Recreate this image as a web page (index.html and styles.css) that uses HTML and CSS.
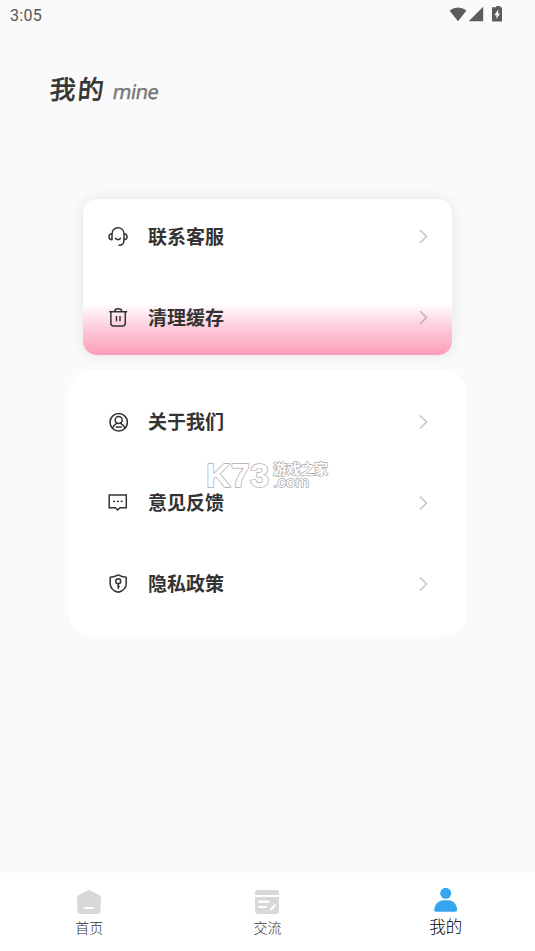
FILE: index.html
```html
<!DOCTYPE html>
<html lang="zh-CN">
<head>
<meta charset="utf-8">
<title>我的</title>
<link rel="stylesheet" href="styles.css">
</head>
<body>
<div class="screen">
  <header class="status">
    <span class="clock">3:05</span>
    <svg class="status-icons" width="56" height="18" viewBox="0 0 56 18" fill="#5c5c5c">
      <path d="M0.5 4.4Q9 -1.6 17.5 4.4L9 15.3Z"/>
      <path d="M34.2 .8V15.3H19.7Z"/>
      <path d="M45 1.2h2.2V0h4v1.2H53V15.5H43V1.200Z"/>
      <path d="M49.200 3.500L45.300 9.200H47.500V13L51.100 7.500H49.200Z" fill="#fafafa"/>
    </svg>
  </header>
  <h1 class="title"><span class="title-main">我的</span><span class="title-sub">mine</span></h1>

  <main>
    <ul class="card card-raised">
      <li class="row">
        <svg class="icon" viewBox="0 0 20 20"><path d="M4 7.500C4 3.800 6.500 1.200 10 1.200S16 3.800 16 7.500V13.500C16 17 14 18.800 11 18.800M4 7.200C2.200 7.200 1 8.300 1 10.300S2.200 13.300 4 13.300ZM16 7.200C17.800 7.200 19 8.300 19 10.300S17.800 13.300 16 13.300M7.400 11.800Q10 14.500 12.600 11.800"/></svg>
        <span class="label">联系客服</span>
        <svg class="chevron" viewBox="0 0 9 16"><path d="M1 1.500L7.500 8L1 14.500"/></svg>
      </li>
      <li class="row">
        <svg class="icon" viewBox="0 0 20 20"><path d="M1.800 4.200H18.600M2.900 4.200V15.800Q2.900 18.500 5.600 18.500H14.600Q17.300 18.500 17.300 15.800V4.200M6.500 4C6.900 .4 13.500 .4 13.900 4M8.500 9V13.300M12 9V13.300"/></svg>
        <span class="label">清理缓存</span>
        <svg class="chevron" viewBox="0 0 9 16"><path d="M1 1.500L7.500 8L1 14.500"/></svg>
      </li>
    </ul>

    <ul class="card card-flat">
      <li class="row">
        <svg class="icon" viewBox="0 0 20 20"><circle cx="10.700" cy="10.300" r="8.700"/><circle cx="10.700" cy="8" r="3.500"/><path d="M4.400 16C5.500 13.500 7.200 12.200 8.900 11.100M17 16C15.900 13.500 14.200 12.200 12.500 11.100M8.200 15.100H13.200"/></svg>
        <span class="label">关于我们</span>
        <svg class="chevron" viewBox="0 0 9 16"><path d="M1 1.500L7.500 8L1 14.500"/></svg>
      </li>
      <li class="row">
        <svg class="icon" viewBox="0 0 20 20"><path stroke-linejoin="miter" d="M1.200 2H18.300V14.700H12L9.700 17L7.400 14.700H1.200Z"/><path stroke-width="1.700" d="M5.800 8.300H6.200M9.600 8.300H10M13.400 8.300H13.800"/></svg>
        <span class="label">意见反馈</span>
        <svg class="chevron" viewBox="0 0 9 16"><path d="M1 1.500L7.500 8L1 14.500"/></svg>
      </li>
      <li class="row">
        <svg class="icon" viewBox="0 0 20 20"><path d="M10.200 .9Q13.600 3 18.200 3.200V9.700Q18.200 15.900 10.200 18.300Q2.200 15.900 2.200 9.700V3.200Q6.800 3 10.200 .9Z"/><circle cx="10.200" cy="7.300" r="2.500"/><path d="M10.200 9.800V14.500M10.200 12.600H11.300"/></svg>
        <span class="label">隐私政策</span>
        <svg class="chevron" viewBox="0 0 9 16"><path d="M1 1.500L7.500 8L1 14.500"/></svg>
      </li>
    </ul>
  </main>

  <nav class="tabs">
    <a class="tab">
      <svg width="26" height="26" viewBox="0 0 26 26"><path d="M11.800 1.300Q13 .7 14.200 1.300L24 6.500Q25 7.100 25 8.300L24.300 22.500Q24.200 25 21.700 25H4.300Q1.800 25 1.700 22.500L1 8.300Q1 7.100 2 6.500Z" fill="#d8d8d8"/><path d="M9.200 19H16.800" stroke="#fff" stroke-width="2" stroke-linecap="round"/></svg>
      <span>首页</span>
    </a>
    <a class="tab">
      <svg width="26" height="26" viewBox="0 0 26 26"><path d="M1 6V4Q1 1 4 1H22Q25 1 25 4V6ZM1 8H25V22Q25 25 22 25H4Q1 25 1 22Z" fill="#d8d8d8"/><path d="M5 12.700H14.500M5 18H12M17 20.500L21.200 16.300" stroke="#fff" stroke-width="2.200" stroke-linecap="round"/></svg>
      <span>交流</span>
    </a>
    <a class="tab tab-active">
      <svg width="26" height="26" viewBox="0 0 26 26" fill="#36a5ef"><circle cx="12.700" cy="6.300" r="5.500"/><path d="M3.500 24.800Q1 24.800 1.200 22.500C1.900 17 6 13.300 10 13.300H15.400C20 13.300 23.500 17 24.200 22.500Q24.400 24.800 22 24.800Z"/></svg>
      <span>我的</span>
    </a>
  </nav>

  <svg class="watermark" width="140" height="50" viewBox="-5 -10 140 50">
    <text class="mark-logo" x="1" y="26.500" textLength="63" lengthAdjust="spacingAndGlyphs">K73</text>
    <text class="mark-name" x="68" y="13.500" textLength="55" lengthAdjust="spacingAndGlyphs">游戏之家</text>
    <text class="mark-domain" x="68" y="27" textLength="36" lengthAdjust="spacingAndGlyphs">.com</text>
  </svg>
</div>
</body>
</html>
```

FILE: styles.css
```css
* {
  box-sizing: border-box;
}

body {
  margin: 0;
  background: #fafafa;
  color: #333;
  font-family: "Noto Sans CJK SC", sans-serif;
}

.screen {
  position: relative;
  display: flex;
  flex-direction: column;
  height: 951px;
  overflow: hidden;
}

.status {
  display: flex;
  justify-content: space-between;
  height: 30px;
  padding: 6px 32px 0 10px;
}

.clock {
  font: 400 16px/19px Roboto, sans-serif;
  color: #555;
  letter-spacing: 0.3px;
}

.status-icons {
  margin-right: -2px;
}

.title {
  display: flex;
  align-items: baseline;
  height: 40px;
  margin: 40px 0 0 50px;
  line-height: 36px;
}

.title-main {
  font-size: 26px;
  font-weight: 400;
  letter-spacing: 2px;
  -webkit-text-stroke: 0.7px #333;
  transform: skewX(-5deg);
}

.title-sub {
  margin-left: 7px;
  font: 400 20px/36px "Noto Sans", sans-serif;
  letter-spacing: -0.5px;
  color: #777;
  -webkit-text-stroke: 0.4px #777;
  transform: skewX(-10deg);
}

main {
  flex: 1;
  padding-top: 89px;
}

.card {
  margin: 0 auto;
  padding: 0;
  list-style: none;
}

.card-raised {
  width: 369px;
  height: 156px;
  border-radius: 14px;
  background: linear-gradient(#fff 0 67%, #fdc7d7 84%, #fd9db8 100%);
  box-shadow: 0 0 14px rgba(0, 0, 0, 0.09);
}

.card-raised .row {
  margin: 0 24px 0 25px;
  transform: translateY(-2.5px);
}

.card-flat {
  width: 399px;
  height: 266px;
  margin-top: 15px;
  padding: 12px 39px 0 40px;
  border-radius: 24px;
  background: #fff;
}

.row {
  display: flex;
  align-items: center;
  height: 80.7px;
}

.icon {
  width: 20px;
  height: 20px;
  fill: none;
  stroke: #333;
  stroke-width: 1.5;
  stroke-linecap: round;
  stroke-linejoin: round;
}

.label {
  flex: 1;
  margin-left: 20px;
  padding-bottom: 2.4px;
  font-size: 19px;
  font-weight: 700;
  line-height: 28px;
}

.chevron {
  width: 9px;
  height: 16px;
  fill: none;
  stroke: #000;
  stroke-opacity: 0.22;
  stroke-width: 1.7;
}

.tabs {
  display: grid;
  grid-template-columns: repeat(3, 1fr);
  height: 78px;
  background: #fff;
}

.tab {
  display: flex;
  flex-direction: column;
  align-items: center;
  padding-top: 16px;
  font-size: 14px;
  font-weight: 300;
  line-height: 20px;
  color: #333;
}

.tab span {
  margin-top: 2px;
}

.tab-active {
  padding-top: 14px;
  font-size: 16.5px;
  color: #000;
}

.tab-active span {
  margin-top: 3px;
}

.watermark {
  position: absolute;
  left: 200px;
  top: 450px;
}

.watermark text {
  fill: #fff;
  stroke: #aaa;
  stroke-width: 1.4;
  stroke-linejoin: round;
  paint-order: stroke;
}

.mark-logo {
  font: 700 33px "Liberation Sans", sans-serif;
}

.mark-name {
  font: 700 13.5px "Noto Sans CJK SC", sans-serif;
}

.mark-domain {
  font: 400 15px "Liberation Sans", sans-serif;
}
```
